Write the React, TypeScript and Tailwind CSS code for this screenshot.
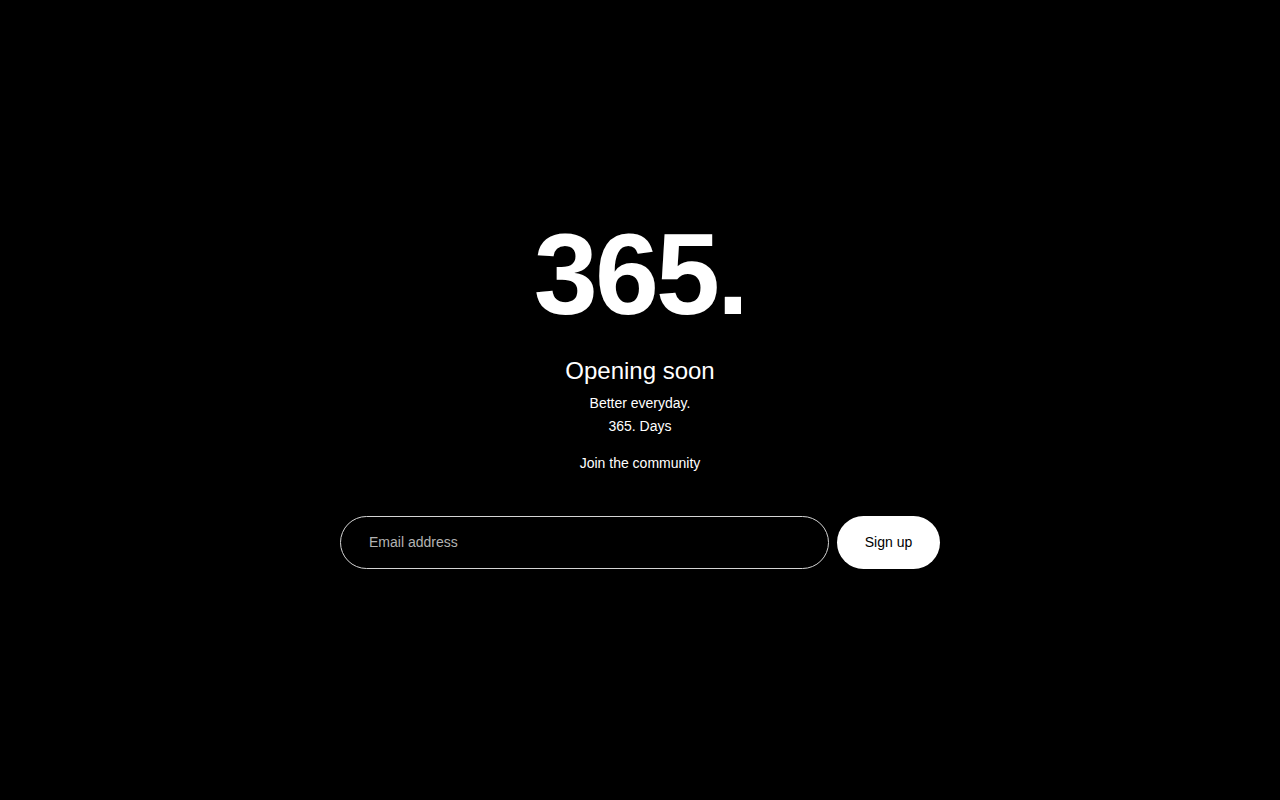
import React, { useState } from 'react'

// Coming-soon landing: big wordmark, tagline, email signup

export default function App() {
  const [email, setEmail] = useState('')

  return (
    <div
      className="flex min-h-screen w-full flex-col items-center justify-center bg-black pb-[14px] text-white"
      style={{ fontFamily: '"Liberation Sans", Arial, sans-serif' }}
    >
      <h1 className="text-[115px] font-bold leading-none tracking-tight">365.</h1>

      <h2 className="mt-[23px] text-2xl leading-8">Opening soon</h2>

      <div className="mt-[5px] flex flex-col items-center text-sm leading-[23px]">
        <p>Better everyday.</p>
        <p>365. Days</p>
      </div>

      <p className="mt-[15px] text-sm leading-5">Join the community</p>

      <form
        className="mt-[43px] flex w-[600px] items-center gap-2"
        onSubmit={e => e.preventDefault()}
      >
        <input
          type="email"
          value={email}
          onChange={e => setEmail(e.target.value)}
          placeholder="Email address"
          className="h-[53px] flex-1 rounded-full border border-[#d4d4d4] bg-black px-7 pb-px text-sm text-white outline-none placeholder:text-[#b3b3b3]"
        />
        <button
          type="submit"
          className="h-[53px] w-[103px] rounded-full bg-white pb-px text-sm text-black"
        >
          Sign up
        </button>
      </form>
    </div>
  )
}
